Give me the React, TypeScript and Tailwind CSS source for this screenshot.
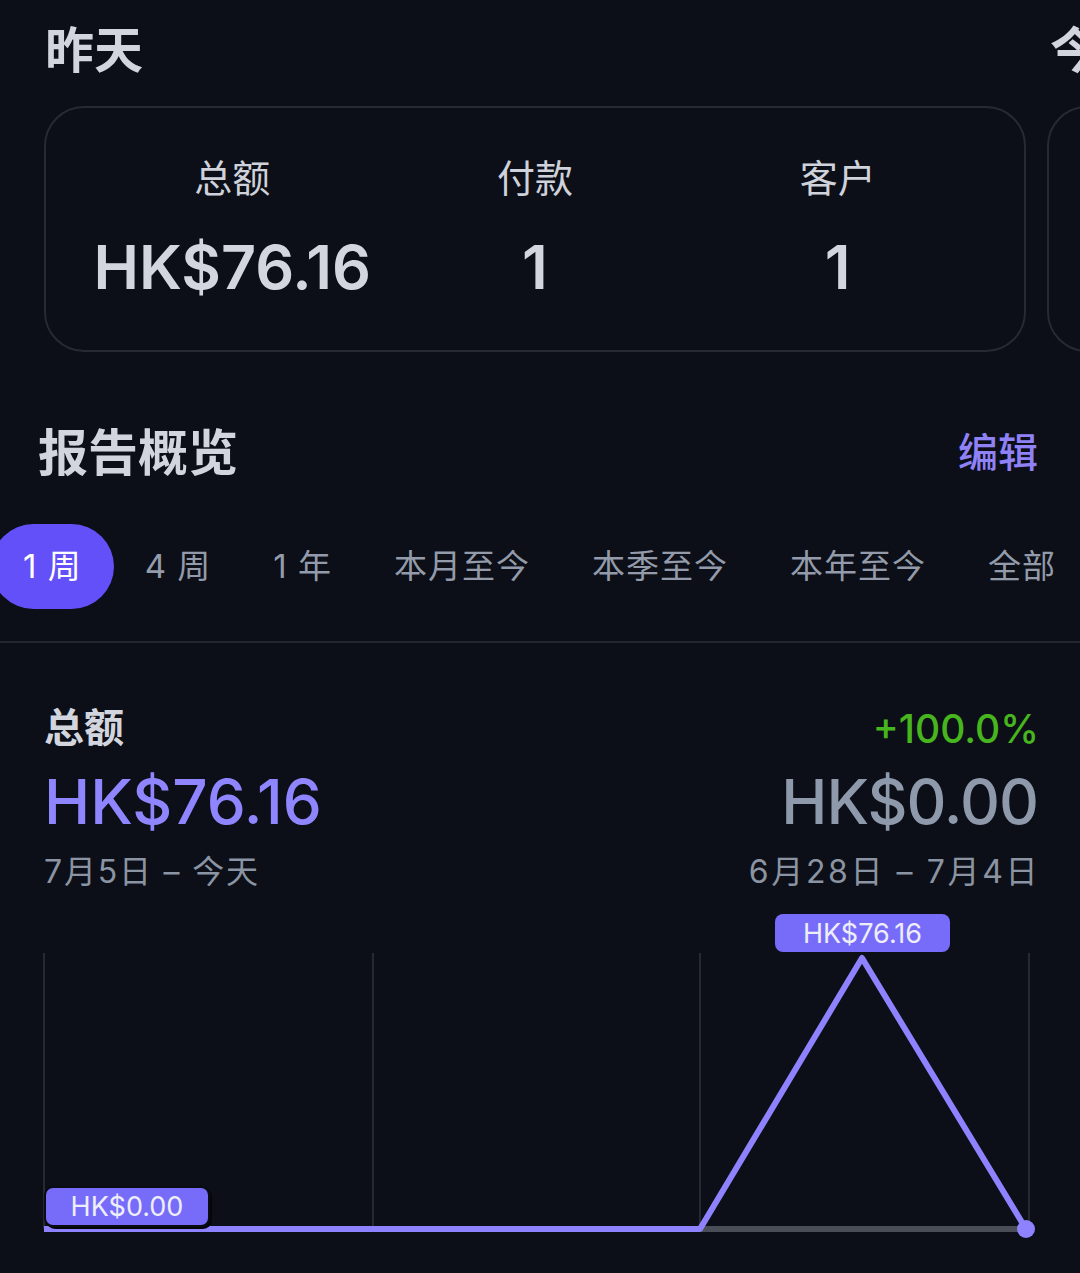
import React from "react";

const tabs = ["1 周", "4 周", "1 年", "本月至今", "本季至今", "本年至今", "全部"];

const Stat = ({ label, value }: { label: string; value: string }) => (
  <div className="flex flex-col items-center">
    <div className="text-[38px] leading-none text-[#cfd2da]">{label}</div>
    <div className="mt-[40px] text-[61px] leading-none font-semibold text-[#d3d6de]">
      {value}
    </div>
  </div>
);

const Chart = () => (
  <div className="relative h-[373px] w-[1080px]">
    <svg width="1080" height="373" viewBox="0 0 1080 373" className="block">
      {[44, 373, 700, 1029].map((x) => (
        <line key={x} x1={x} y1={52} x2={x} y2={328} stroke="#262932" strokeWidth={2} />
      ))}
      <line x1={700} y1={328} x2={1026} y2={328} stroke="#4a4e57" strokeWidth={6} />
      <polyline
        points="44,328 700,328 862,57 1026,328"
        fill="none"
        stroke="#8e82ff"
        strokeWidth={6}
        strokeLinejoin="round"
      />
      <circle cx={1026} cy={328} r={9} fill="#8e82ff" />
    </svg>
    <div className="absolute left-[775px] top-[13px] flex h-[38px] w-[175px] items-center justify-center rounded-[8px] bg-[#776cfa] text-[27px] leading-none text-[#eeeef8]">
      HK$76.16
    </div>
    <div className="absolute left-[44px] top-[285px] flex h-[41px] w-[166px] items-center justify-center rounded-[9px] border-2 border-[#0a0c12] bg-[#776cfa] text-[27px] leading-none text-[#eeeef8] shadow-[2px_2px_0_#05060a]">
      HK$0.00
    </div>
  </div>
);

export default function App() {
  return (
    <div className="min-h-[1273px] w-[1080px] overflow-hidden bg-[#0c0f17] pt-[26px] font-['Inter','Noto_Sans_CJK_SC',sans-serif]">
      <div className="flex gap-[21px] pl-[44px]">
        <div className="w-[982px] shrink-0">
          <div className="pl-[1px] text-[49px] font-bold leading-none text-[#d2d5dd]">昨天</div>
          <div className="mt-[31px] grid h-[246px] grid-cols-3 rounded-[40px] border-2 border-[#272a33] px-[35px] pt-[51px]">
            <Stat label="总额" value="HK$76.16" />
            <Stat label="付款" value="1" />
            <Stat label="客户" value="1" />
          </div>
        </div>
        <div className="w-[982px] shrink-0">
          <div className="pl-[3px] text-[49px] font-bold leading-none text-[#d2d5dd]">今天</div>
          <div className="mt-[31px] h-[246px] rounded-[40px] border-2 border-[#272a33]" />
        </div>
      </div>

      <div className="mt-[76px] flex items-center justify-between pl-[38px] pr-[42px]">
        <div className="text-[50px] font-bold leading-none text-[#d2d5dd]">报告概览</div>
        <div className="text-[40px] font-medium leading-none text-[#8f82f7]">编辑</div>
      </div>

      <div className="mt-[46px] -ml-[9px] flex items-center whitespace-nowrap">
        {tabs.map((t, i) => (
          <div
            key={t}
            className={
              i === 0
                ? "flex h-[85px] items-center rounded-full bg-[#6450f8] px-[32px] text-[33px] leading-none tracking-[1px] text-white"
                : "flex h-[85px] items-center px-[31px] text-[33px] leading-none tracking-[1px] text-[#939baa]"
            }
          >
            {t}
          </div>
        ))}
      </div>

      <div className="mt-[32px] h-[2px] w-full bg-[#23262e]" />

      <div className="px-[44px]">
        <div className="mt-[65px] flex items-center justify-between">
          <div className="text-[40px] font-semibold leading-none text-[#d2d5dd]">总额</div>
          <div className="-mr-[3px] text-[39px] font-medium leading-none text-[#47b51e]">+100.0%</div>
        </div>
        <div className="mt-[23px] flex items-center justify-between">
          <div className="text-[62px] font-medium leading-none text-[#8f86ff]">HK$76.16</div>
          <div className="-mr-[2px] text-[62px] font-medium leading-none tracking-[-1px] text-[#8e99ab]">HK$0.00</div>
        </div>
        <div className="mt-[23px] flex items-center justify-between text-[32px] leading-none text-[#8b94a2]">
          <div className="tracking-[1.8px]">7月5日 – 今天</div>
          <div className="-mr-[4px] tracking-[2.6px]">6月28日 – 7月4日</div>
        </div>
      </div>

      <div className="mt-[13px]">
        <Chart />
      </div>
    </div>
  );
}
